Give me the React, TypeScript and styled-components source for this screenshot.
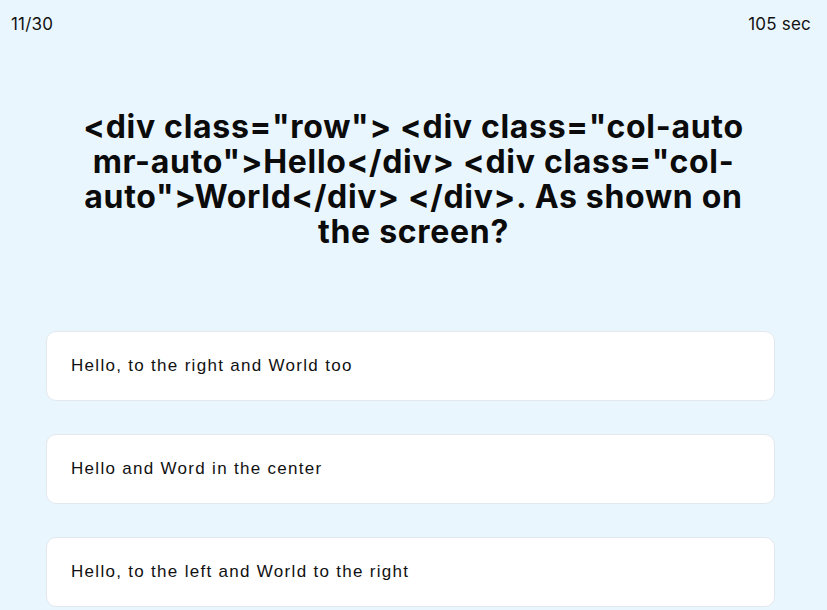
import React from 'react';
import styled, { createGlobalStyle } from 'styled-components';

const GlobalStyle = createGlobalStyle`
  html, body {
    margin: 0;
    padding: 0;
    background: #eaf6fe;
  }
  body {
    font-family: Inter, "Liberation Sans", sans-serif;
    color: #111;
  }
`;

const Page = styled.div`
  width: 827px;
  height: 610px;
  overflow: hidden;
  background: #eaf6fe;
  display: flex;
  flex-direction: column;
`;

const TopBar = styled.div`
  display: flex;
  justify-content: space-between;
  align-items: center;
  padding: 14px 16px 0 11px;
  font-family: Inter, "Liberation Sans", sans-serif;
  font-size: 17px;
  line-height: 20px;
  letter-spacing: 0.2px;
  color: #111;
`;

const Question = styled.h1`
  margin: 75px auto 0;
  width: 668px;
  text-align: center;
  font-family: Inter, "Liberation Sans", sans-serif;
  font-weight: 700;
  font-size: 32px;
  line-height: 35px;
  letter-spacing: 0.7px;
  color: #0b0b0b;
`;

const Answers = styled.div`
  display: flex;
  flex-direction: column;
  gap: 33px;
  margin: 82px 52px 0 46px;
`;

const AnswerCard = styled.div`
  box-sizing: border-box;
  height: 70px;
  display: flex;
  align-items: center;
  padding: 0 24px;
  background: #ffffff;
  border: 1px solid #e3e8ee;
  border-radius: 10px;
  font-family: "Liberation Sans", Arial, sans-serif;
  font-size: 17px;
  letter-spacing: 1.3px;
  color: #111;
  cursor: pointer;
`;

const answers = [
  'Hello, to the right and World too',
  'Hello and Word in the center',
  'Hello, to the left and World to the right',
];

export default function App() {
  return (
    <>
      <GlobalStyle />
      <Page>
        <TopBar>
          <span>11/30</span>
          <span>105 sec</span>
        </TopBar>
        <Question>
          {'<div class="row"> <div class="col-auto mr-auto">Hello</div> <div class="col-auto">World</div> </div>. As shown on the screen?'}
        </Question>
        <Answers>
          {answers.map((a) => (
            <AnswerCard key={a}>{a}</AnswerCard>
          ))}
        </Answers>
      </Page>
    </>
  );
}
